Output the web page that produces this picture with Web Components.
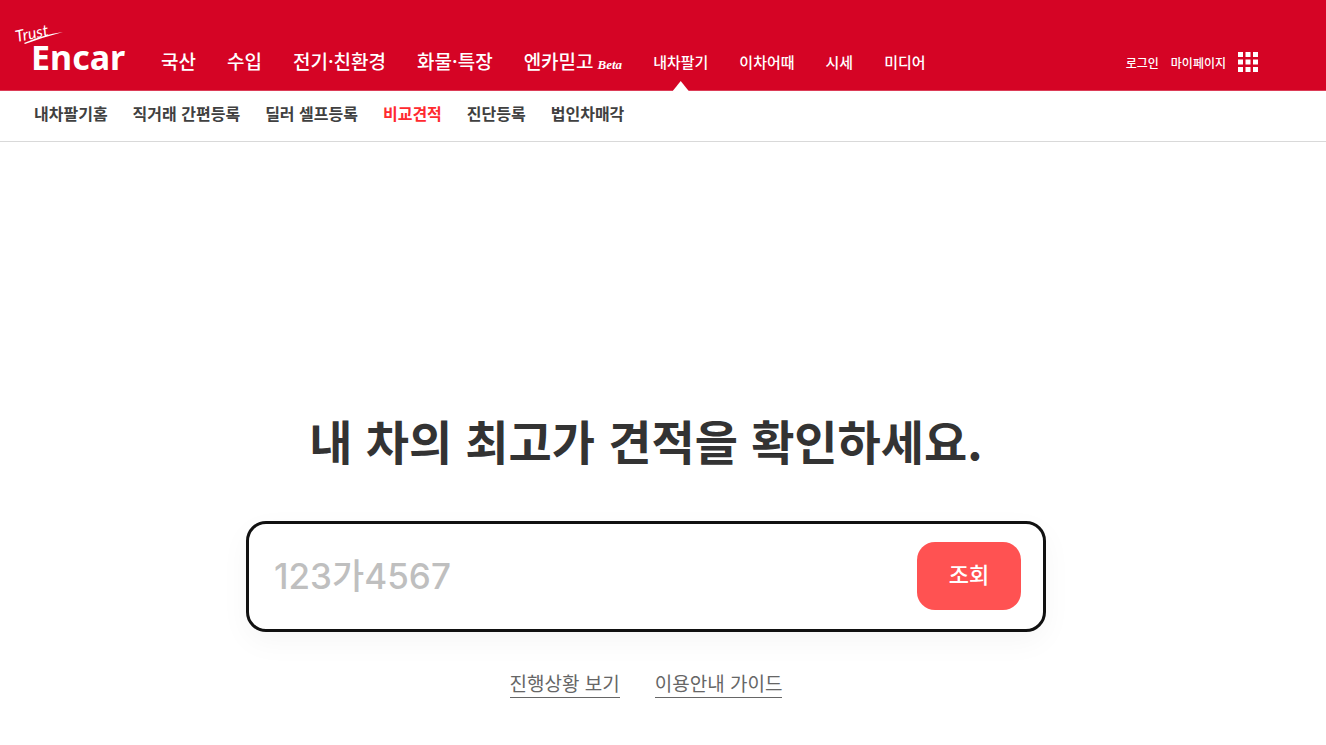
<!DOCTYPE html>
<html lang="ko">
<head>
<meta charset="utf-8">
<meta name="viewport" content="width=device-width, initial-scale=1">
<title>엔카 비교견적</title>
<style>
  body { margin: 0; background: #fff; color: #333; font-family: "Noto Sans CJK KR", sans-serif; }
</style>
</head>
<body>
<encar-header>
  <encar-logo slot="logo"></encar-logo>
  <nav-item href="#domestic">국산</nav-item>
  <nav-item href="#import">수입</nav-item>
  <nav-item href="#electric">전기·친환경</nav-item>
  <nav-item href="#truck">화물·특장</nav-item>
  <nav-item href="#trust" badge="Beta">엔카믿고</nav-item>
  <nav-item small current href="#sell">내차팔기</nav-item>
  <nav-item small href="#review">이차어때</nav-item>
  <nav-item small href="#price">시세</nav-item>
  <nav-item small href="#media">미디어</nav-item>
  <user-menu slot="user"></user-menu>
</encar-header>
<sub-nav>
  <sub-item href="#home">내차팔기홈</sub-item>
  <sub-item href="#direct">직거래 간편등록</sub-item>
  <sub-item href="#dealer">딜러 셀프등록</sub-item>
  <sub-item href="#compare" current>비교견적</sub-item>
  <sub-item href="#inspect">진단등록</sub-item>
  <sub-item href="#corporate">법인차매각</sub-item>
</sub-nav>
<quote-panel>
  <span slot="title">내 차의 최고가 견적을 확인하세요.</span>
  <plate-search></plate-search>
  <text-link slot="links" href="#status">진행상황 보기</text-link>
  <text-link slot="links" href="#guide">이용안내 가이드</text-link>
</quote-panel>

<script>
function define(name, html, setup) {
  const template = document.createElement('template');
  template.innerHTML = html;
  customElements.define(name, class extends HTMLElement {
    constructor() {
      super();
      this.attachShadow({ mode: 'open' }).append(template.content.cloneNode(true));
    }
    connectedCallback() { if (setup) setup(this, this.shadowRoot); }
  });
}
function link(host, root) {
  const a = root.querySelector('a');
  a.href = host.getAttribute('href');
  if (host.hasAttribute('current')) a.setAttribute('aria-current', 'page');
}

define('encar-header', `
  <style>
    :host { display: block; background: #d50425; color: #fff; }
    header { display: flex; align-items: flex-start; height: 90px; padding: 0 68px 0 14px; border-bottom: 1px solid #dc3c57; }
    nav { display: flex; align-items: stretch; gap: 31px; height: 91px; margin-left: 35px; }
    ::slotted([slot=user]) { margin-left: auto; }
  </style>
  <header><slot name="logo"></slot><nav aria-label="주요 메뉴"><slot></slot></nav><slot name="user"></slot></header>`);

define('encar-logo', `
  <style>
    :host { display: block; flex: none; }
    a { display: block; position: relative; width: 112px; height: 90px; color: #fff; text-decoration: none; }
    .name { display: block; padding: 33px 0 0 17px; font: 700 34px/48px "Noto Sans", sans-serif; }
    .trust { position: absolute; left: 1px; top: 24px; font: italic 400 16px/18px Lato, sans-serif; transform: rotate(-12deg); }
    svg { position: absolute; left: 0; top: 22px; }
  </style>
  <a href="#main"><span class="trust">Trust</span><span class="name">Encar</span>
  <svg width="52" height="24" viewBox="0 0 52 24" aria-hidden="true"><path d="M10 21 Q28 13 49 10 Q30 15 11 22Z" fill="#fff"/></svg></a>`);

define('nav-item', `
  <style>
    :host { display: block; flex: none; }
    a { position: relative; display: flex; align-items: baseline; gap: 4px; height: 100%; box-sizing: border-box; padding-top: 46px; color: #fff; text-decoration: none; white-space: nowrap; font-size: 19px; line-height: 30px; font-weight: 500; }
    :host([small]) a { font-size: 15px; padding-top: 47px; }
    :host([current]) a::after { content: ""; position: absolute; left: 50%; bottom: 0; width: 16px; height: 10px; margin-left: -8px; background: #fff; clip-path: polygon(50% 0, 100% 100%, 0 100%); }
    i { font: italic 700 13px/16px "Liberation Serif", serif; }
    i:empty { display: none; }
  </style>
  <a><slot></slot><i></i></a>`, (host, root) => {
    link(host, root);
    root.querySelector('i').textContent = host.getAttribute('badge') || '';
  });

define('user-menu', `
  <style>
    :host { display: block; flex: none; }
    div { display: flex; align-items: center; gap: 12px; padding-top: 50px; height: 24px; }
    a { color: #fff; text-decoration: none; font-size: 12px; line-height: 24px; padding-top: 2px; font-weight: 500; white-space: nowrap; }
    button { display: block; padding: 0; border: 0; background: none; color: #fff; }
    svg { display: block; }
  </style>
  <div><a href="#login">로그인</a><a href="#mypage">마이페이지</a>
  <button type="button" aria-label="전체 메뉴"><svg width="20" height="20" viewBox="0 0 20 20" fill="#fff" aria-hidden="true"><path d="M0 0h5v5H0zM7.5 0h5v5h-5zM15 0h5v5h-5zM0 7.5h5v5H0zM7.5 7.5h5v5h-5zM15 7.5h5v5h-5zM0 15h5v5H0zM7.5 15h5v5h-5zM15 15h5v5h-5z"/></svg></button></div>`);

define('sub-nav', `
  <style>
    :host { display: block; background: #fff; border-bottom: 1px solid #d9d9d9; }
    nav { display: flex; gap: 25px; height: 50px; padding: 0 34px; }
  </style>
  <nav aria-label="내차팔기 메뉴"><slot></slot></nav>`);

define('sub-item', `
  <style>
    :host { display: block; flex: none; }
    a { display: block; font-size: 16px; line-height: 44px; font-weight: 700; color: #404040; text-decoration: none; white-space: nowrap; }
    a[aria-current] { color: #ff2a2f; }
  </style>
  <a><slot></slot></a>`, link);

define('quote-panel', `
  <style>
    :host { display: block; }
    main { display: flex; flex-direction: column; align-items: center; padding: 262px 34px 40px 0; }
    h1 { margin: 0 0 45px; font-size: 47px; line-height: 72px; font-weight: 700; color: #333; white-space: nowrap; }
    .links { display: flex; gap: 35px; margin-top: 38px; }
  </style>
  <main><h1><slot name="title"></slot></h1><slot></slot><div class="links"><slot name="links"></slot></div></main>`);

define('plate-search', `
  <style>
    :host { display: block; width: 100%; max-width: 800px; }
    form { display: flex; align-items: center; gap: 20px; box-sizing: border-box; height: 111px; padding: 0 22px 2px 25px; border: 3px solid #111; border-radius: 20px; background: #fff; box-shadow: 0 10px 30px rgba(0,0,0,.04); }
    input { flex: 1; min-width: 0; height: 60px; padding: 0; border: 0; outline: 0; background: none; color: #333; font: 500 35px/60px Inter, "Noto Sans CJK KR", sans-serif; }
    input::placeholder { color: #bfbfbf; opacity: 1; }
    button { flex: none; width: 104px; height: 68px; padding: 0 0 6px; border: 0; border-radius: 18px; background: #ff5252; color: #fff; font: 500 22px/32px "Noto Sans CJK KR", sans-serif; }
  </style>
  <form><input type="text" aria-label="차량번호" placeholder="123가4567"><button type="button">조회</button></form>`);

define('text-link', `
  <style>
    :host { display: block; }
    a { display: block; border-bottom: 1px solid #666; padding-bottom: 2px; color: #666; font-size: 19px; line-height: 25px; text-decoration: none; white-space: nowrap; }
  </style>
  <a><slot></slot></a>`, link);
</script>
</body>
</html>
